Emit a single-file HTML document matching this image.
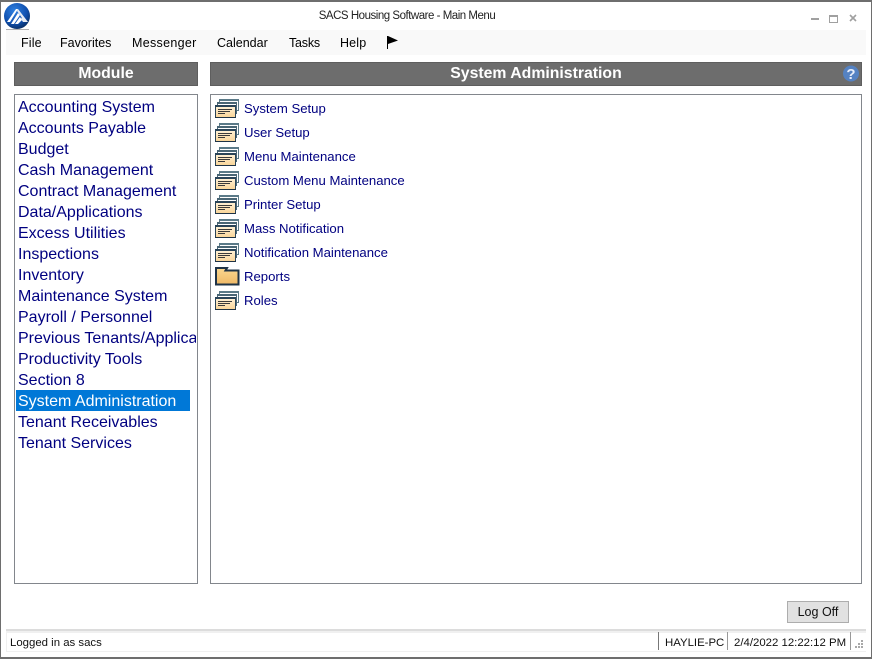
<!DOCTYPE html>
<html><head><meta charset="utf-8">
<style>
html,body{margin:0;padding:0;background:#fff}
#w{position:relative;width:872px;height:659px;overflow:hidden;background:#fff;font-family:"Liberation Sans",sans-serif}
.a{position:absolute;white-space:nowrap}
.h{background:#6d6d6d;border:1px solid #5e5e5e;box-sizing:border-box;color:#fff;font-weight:bold;font-size:15.8px;text-align:center;line-height:22px;height:24px;top:62px}
.box{border:1px solid #82868c;box-sizing:border-box;background:#fff}
.m{top:36px;font-size:12.5px;line-height:15px;color:#000;letter-spacing:.15px}
.l{left:18px;font-size:16px;line-height:21px;height:21px;color:#000080}
.r{left:244px;font-size:13.15px;line-height:16px;color:#000080}
.i{position:absolute;left:215px}
.s{top:636px;font-size:11.4px;line-height:15px;color:#111}
</style></head><body><div id="w">
<div class="a" style="left:0;top:0;width:870px;height:655px;border:1px solid #6e6e6e;border-width:2px 1px 2px 1px"></div>

<svg class="i" style="left:3px;top:2px" width="28" height="28" viewBox="0 0 28 28">
<defs><radialGradient id="g" cx=".4" cy=".3" r=".8"><stop offset="0" stop-color="#2f80e0"/><stop offset=".6" stop-color="#0f4fae"/><stop offset="1" stop-color="#05244f"/></radialGradient></defs>
<circle cx="14" cy="14" r="13" fill="url(#g)"/>
<path d="M4 20L13 7h2L7 20zM8 22L15 11l2 2-6 9zM12 22l5-7 2 3-4 4z" fill="#fff"/>
<path d="M15 7l10 13h-3L14 9zM19 15l3 5h-2l-2-3z" fill="#e6ebf3"/>
<path d="M3 27h23v1H3z" fill="#b0b0b0"/>
</svg>

<div class="a" style="left:0;top:9px;text-align:center;font-size:11.5px;letter-spacing:-.48px;line-height:15px;color:#222;width:814px">SACS Housing Software - Main Menu</div>

<div class="a" style="left:811px;top:18px;width:8px;height:2px;background:#a0a0a0"></div>
<div class="a" style="left:829px;top:15px;width:7px;height:5px;border:1px solid #a0a0a0;border-top-width:2px"></div>
<svg class="i" style="left:849px;top:14px" width="8" height="8" viewBox="0 0 8 8"><path d="M1 1l6 6M7 1L1 7" stroke="#a0a0a0" stroke-width="1.6"/></svg>

<div class="a" style="left:6px;top:30px;width:860px;height:25px;background:#f9f9f9"></div>
<div class="a m" style="left:21px">File</div>
<div class="a m" style="left:60px;letter-spacing:0">Favorites</div>
<div class="a m" style="left:132px;letter-spacing:.3px">Messenger</div>
<div class="a m" style="left:217px;letter-spacing:0">Calendar</div>
<div class="a m" style="left:289px;letter-spacing:-.2px">Tasks</div>
<div class="a m" style="left:340px">Help</div>
<svg class="i" style="left:386px;top:35px" width="13" height="15" viewBox="0 0 13 15"><path d="M1.500 1v13" stroke="#000" stroke-width="1"/><path d="M2 1l10 4.500L2 9z" fill="#000"/></svg>

<div class="a h" style="left:14px;width:184px">Module</div>
<div class="a h" style="left:210px;width:652px">System Administration</div>
<svg class="i" style="left:843px;top:65px" width="16" height="18" viewBox="0 0 16 18"><circle cx="8" cy="8.500" r="8" fill="#5582c2"/><text x="8" y="14" text-anchor="middle" font-family="Liberation Sans" font-weight="bold" font-size="15" fill="#e8eefa">?</text></svg>

<div class="a box" style="left:14px;top:94px;width:184px;height:490px"></div>
<div class="a box" style="left:210px;top:94px;width:652px;height:490px"></div>
<div class="a" style="left:16px;top:390px;width:174px;height:21px;background:#0078d7"></div>

<div style="position:absolute;left:0;top:0;width:196px;height:600px;overflow:hidden">
<div class="a l" style="top:97px">Accounting System</div>
<div class="a l" style="top:118px">Accounts Payable</div>
<div class="a l" style="top:139px">Budget</div>
<div class="a l" style="top:160px">Cash Management</div>
<div class="a l" style="top:181px">Contract Management</div>
<div class="a l" style="top:202px">Data/Applications</div>
<div class="a l" style="top:223px">Excess Utilities</div>
<div class="a l" style="top:244px">Inspections</div>
<div class="a l" style="top:265px">Inventory</div>
<div class="a l" style="top:286px">Maintenance System</div>
<div class="a l" style="top:307px">Payroll / Personnel</div>
<div class="a l" style="top:328px">Previous Tenants/Applicants</div>
<div class="a l" style="top:349px">Productivity Tools</div>
<div class="a l" style="top:370px">Section 8</div>
<div class="a l" style="top:391px;color:#fff">System Administration</div>
<div class="a l" style="top:412px">Tenant Receivables</div>
<div class="a l" style="top:433px">Tenant Services</div>
</div>

<svg width="0" height="0" style="position:absolute"><defs>
<linearGradient id="pe" x1="0" y1="0" x2="0" y2="1"><stop offset="0" stop-color="#fff3dc"/><stop offset="1" stop-color="#f9d496"/></linearGradient>
<linearGradient id="fo" x1="0" y1="0" x2="0" y2="1"><stop offset="0" stop-color="#fbd88f"/><stop offset="1" stop-color="#efb866"/></linearGradient>
<symbol id="w1" viewBox="0 0 25 20">
<path d="M4.500 .5h19v11h-19z" fill="#fff" stroke="#5b7a88"/><path d="M4 0h20v2H4z" fill="#5b7a88"/>
<path d="M2.500 3.500h19v11h-19z" fill="#fff" stroke="#4a6675"/><path d="M2 3h20v2H2z" fill="#4a6675"/>
<path d="M.5 6.500h20v12h-20z" fill="url(#pe)" stroke="#2a4458"/><path d="M0 6h21v2H0z" fill="#2a4458"/>
<path d="M3 10h14v1H3zM3 12h12v1H3zM3 14h7v1H3z" fill="#3a3a3a"/>
<path d="M0 18h21v1H0z" fill="#1f3346"/>
</symbol>
<symbol id="f1" viewBox="0 0 25 20">
<path d="M1 17.500V1h11l-1.500 2.500H23.500v14z" fill="url(#fo)" stroke="#1f3346" stroke-width="2"/>
</symbol>
</defs></svg>

<svg class="i" style="top:99px" width="25" height="20"><use href="#w1"/></svg>
<svg class="i" style="top:123px" width="25" height="20"><use href="#w1"/></svg>
<svg class="i" style="top:147px" width="25" height="20"><use href="#w1"/></svg>
<svg class="i" style="top:171px" width="25" height="20"><use href="#w1"/></svg>
<svg class="i" style="top:195px" width="25" height="20"><use href="#w1"/></svg>
<svg class="i" style="top:219px" width="25" height="20"><use href="#w1"/></svg>
<svg class="i" style="top:243px" width="25" height="20"><use href="#w1"/></svg>
<svg class="i" style="top:267px" width="25" height="20"><use href="#f1"/></svg>
<svg class="i" style="top:291px" width="25" height="20"><use href="#w1"/></svg>

<div class="a r" style="top:101px">System Setup</div>
<div class="a r" style="top:125px">User Setup</div>
<div class="a r" style="top:149px">Menu Maintenance</div>
<div class="a r" style="top:173px">Custom Menu Maintenance</div>
<div class="a r" style="top:197px">Printer Setup</div>
<div class="a r" style="top:221px">Mass Notification</div>
<div class="a r" style="top:245px">Notification Maintenance</div>
<div class="a r" style="top:269px">Reports</div>
<div class="a r" style="top:293px">Roles</div>

<div class="a" style="left:787px;top:601px;width:62px;height:22px;box-sizing:border-box;background:#e1e1e1;border:1px solid #adadad;text-align:center;font-size:12.5px;line-height:20px;color:#111">Log Off</div>

<div class="a" style="left:6px;top:629px;width:860px;height:2px;background:#dcdcdc"></div>
<div class="a" style="left:6px;top:631px;width:860px;height:2px;background:#f0f0f0"></div>
<div class="a" style="left:6px;top:651px;width:860px;height:1px;background:#f0f0f0"></div>
<div class="a" style="left:6px;top:631px;width:1px;height:21px;background:#f0f0f0"></div>
<div class="a s" style="left:10px">Logged in as sacs</div>
<div class="a" style="left:658px;top:632px;width:1px;height:18px;background:#777"></div>
<div class="a s" style="left:665px">HAYLIE-PC</div>
<div class="a" style="left:727px;top:632px;width:1px;height:18px;background:#999"></div>
<div class="a s" style="left:734px">2/4/2022 12:22:12 PM</div>
<div class="a" style="left:850px;top:632px;width:1px;height:18px;background:#999"></div>
<svg class="i" style="left:855px;top:640px" width="9" height="9" viewBox="0 0 9 9"><path d="M6 0h2v2H6zM3 3h2v2H3zM6 3h2v2H6zM0 6h2v2H0zM3 6h2v2H3zM6 6h2v2H6z" fill="#a8a8a8"/></svg>
</div></body></html>
